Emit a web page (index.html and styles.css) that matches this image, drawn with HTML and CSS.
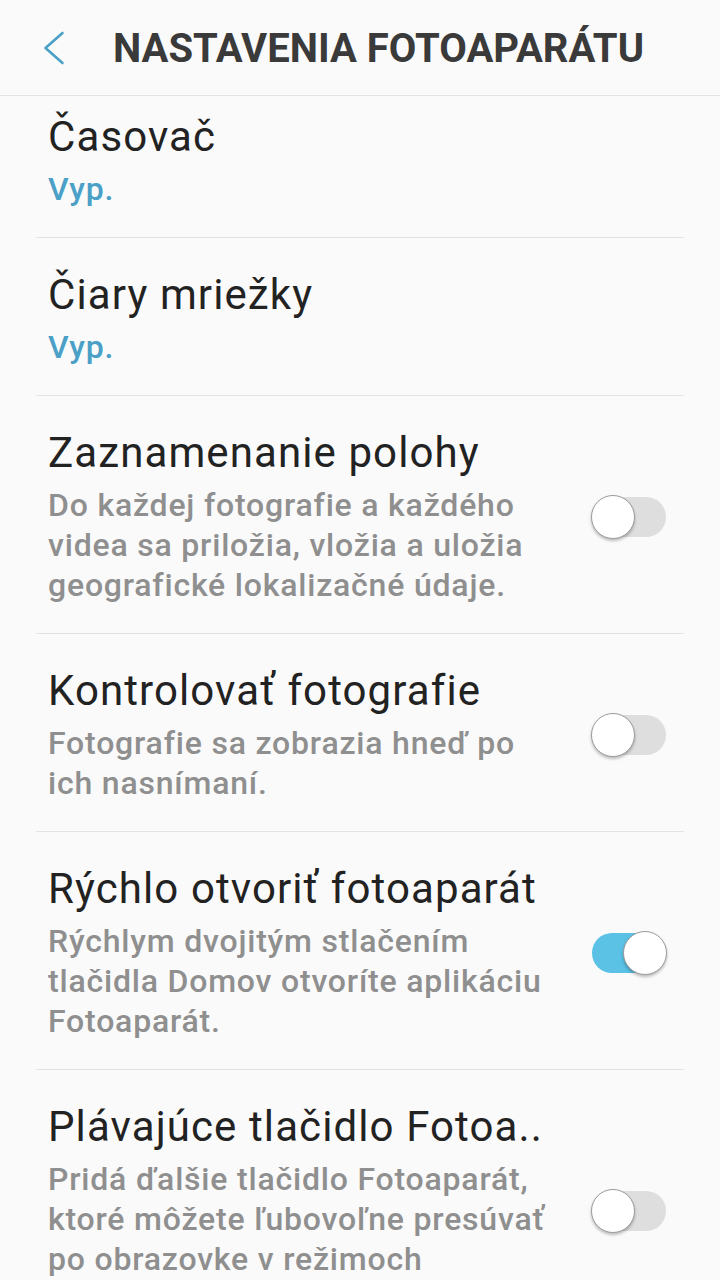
FILE: index.html
```html
<!DOCTYPE html>
<html lang="sk">
<head>
<meta charset="utf-8">
<title>Nastavenia fotoaparátu</title>
<link rel="stylesheet" href="styles.css">
</head>
<body>
<header class="appbar">
  <button class="back" aria-label="Späť">
    <svg width="24" height="36" viewBox="0 0 24 36"><polyline points="20.5,3 3.5,18 20.5,33" fill="none" stroke="#4aa0c6" stroke-width="2.6" stroke-linecap="round" stroke-linejoin="round"/></svg>
  </button>
  <h1 class="appbar-title">NASTAVENIA FOTOAPARÁTU</h1>
</header>
<main class="list">
  <div class="item item-first">
    <div class="text">
      <div class="title">Časovač</div>
      <div class="value">Vyp.</div>
    </div>
  </div>
  <div class="item">
    <div class="text">
      <div class="title">Čiary mriežky</div>
      <div class="value">Vyp.</div>
    </div>
  </div>
  <div class="item">
    <div class="text">
      <div class="title">Zaznamenanie polohy</div>
      <div class="sub">Do každej fotografie a každého<br>videa sa priložia, vložia a uložia<br>geografické lokalizačné údaje.</div>
    </div>
    <span class="switch"><span class="thumb"></span></span>
  </div>
  <div class="item">
    <div class="text">
      <div class="title">Kontrolovať fotografie</div>
      <div class="sub">Fotografie sa zobrazia hneď po<br>ich nasnímaní.</div>
    </div>
    <span class="switch"><span class="thumb"></span></span>
  </div>
  <div class="item">
    <div class="text">
      <div class="title">Rýchlo otvoriť fotoaparát</div>
      <div class="sub">Rýchlym dvojitým stlačením<br>tlačidla Domov otvoríte aplikáciu<br>Fotoaparát.</div>
    </div>
    <span class="switch on"><span class="thumb"></span></span>
  </div>
  <div class="item">
    <div class="text">
      <div class="title">Plávajúce tlačidlo Fotoa..</div>
      <div class="sub">Pridá ďalšie tlačidlo Fotoaparát,<br>ktoré môžete ľubovoľne presúvať<br>po obrazovke v režimoch<br>Fotoaparát a Video.</div>
    </div>
    <span class="switch"><span class="thumb"></span></span>
  </div>
</main>
</body>
</html>
```
FILE: styles.css
```css
html, body {
  margin: 0;
  padding: 0;
  background: #fafafa;
  height: 1280px;
  overflow: hidden;
  font-family: Roboto, "Noto Sans", sans-serif;
}

.appbar {
  height: 95px;
  display: flex;
  align-items: center;
  border-bottom: 1px solid #e3e3e3;
}

.back {
  width: 113px;
  height: 95px;
  padding: 0 0 0 42px;
  border: 0;
  background: none;
  display: flex;
  align-items: center;
  justify-content: flex-start;
}

.appbar-title {
  margin: 0;
  font-size: 40px;
  font-weight: 700;
  color: #3a3a3a;
  padding-top: 2px;
}

.list {
  margin: 0 36px;
  height: 1184px;
  overflow: hidden;
}

.item {
  display: flex;
  align-items: center;
  padding: 33px 18px 28px 12px;
  border-bottom: 1px solid #e3e3e3;
}

.item-first {
  margin-top: -16px;
}

.text {
  flex: 1;
  min-width: 0;
}

.title {
  font-size: 42px;
  line-height: 48px;
  letter-spacing: 1.1px;
  color: #222;
  white-space: nowrap;
  margin-bottom: 8px;
}

.value,
.sub {
  font-size: 32px;
  line-height: 40px;
  font-weight: 500;
  letter-spacing: 0.8px;
  white-space: nowrap;
}

.value {
  color: #4aa0c6;
}

.sub {
  color: #8f8f8f;
}

.switch {
  position: relative;
  flex: none;
  width: 74px;
  height: 40px;
  border-radius: 20px;
  background: #dedede;
}

.switch .thumb {
  position: absolute;
  top: -2px;
  left: -1px;
  width: 42px;
  height: 42px;
  border-radius: 50%;
  background: #fff;
  border: 1px solid #9c9c9c;
  box-shadow: 0 2px 3px rgba(0, 0, 0, 0.25);
}

.switch.on {
  background: #5bc1e5;
}

.switch.on .thumb {
  left: auto;
  right: -1px;
}
```
